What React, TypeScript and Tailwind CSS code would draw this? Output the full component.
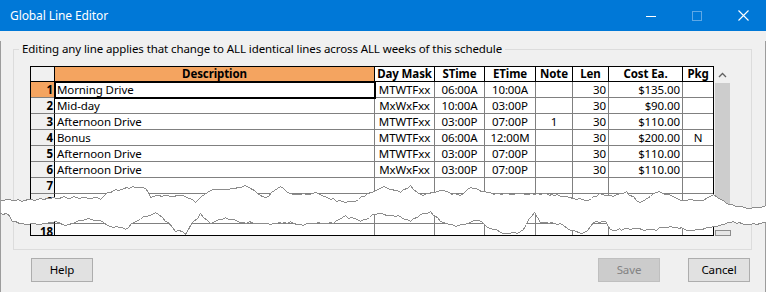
import React from "react";
import clsx from "clsx";

type Pt = [number, number];

// rough outline of the torn strip that hides rows 9..17
const upperEdge: Pt[] = [
  [0, 200], [15, 200], [40, 199], [50, 198], [70, 197], [100, 198], [107, 193], [115, 190],
  [135, 186], [145, 188], [150, 196], [170, 196], [180, 194], [195, 201], [210, 190], [225, 188],
  [247, 186], [257, 193], [265, 197], [280, 186], [290, 193], [300, 194], [315, 193], [330, 198],
  [345, 203], [355, 200], [383, 187], [400, 192], [410, 186], [420, 195], [440, 190], [460, 196],
  [470, 187], [490, 193], [510, 193], [540, 193], [560, 195], [585, 200], [599, 194], [610, 196],
  [626, 192], [639, 202], [659, 191], [680, 200], [700, 200], [713, 195], [720, 200], [735, 206],
  [750, 208], [766, 205],
];

const lowerEdge: Pt[] = [
  [0, 213], [8, 214], [12, 222], [25, 223], [40, 224], [55, 221], [65, 225], [75, 223], [85, 218],
  [100, 220], [110, 226], [125, 228], [140, 218], [155, 212], [165, 220], [175, 230], [185, 233],
  [190, 225], [200, 214], [210, 222], [225, 218], [240, 222], [260, 222], [270, 223], [290, 222],
  [300, 225], [315, 222], [330, 223], [345, 216], [360, 221], [375, 214], [395, 215], [410, 221],
  [420, 214], [430, 212], [440, 221], [455, 225], [470, 222], [478, 219], [490, 228], [506, 233],
  [520, 232], [534, 212], [540, 222], [560, 223], [570, 230], [584, 233], [593, 222], [605, 222],
  [610, 230], [630, 228], [650, 230], [670, 226], [690, 230], [713, 226], [730, 222], [750, 224],
  [766, 222],
];

const roughen = (pts: Pt[], seed: number): Pt[] => {
  let s = seed;
  const rnd = () => {
    s = (s * 9301 + 49297) % 233280;
    return s / 233280;
  };
  const out: Pt[] = [];
  for (let i = 0; i < pts.length - 1; i++) {
    const [x1, y1] = pts[i];
    const [x2, y2] = pts[i + 1];
    const steps = Math.max(1, Math.round((x2 - x1) / 3));
    for (let k = 0; k < steps; k++) {
      const x = x1 + ((x2 - x1) * k) / steps;
      const y = y1 + ((y2 - y1) * k) / steps + (rnd() - 0.5) * 2;
      out.push([Math.round(x), Math.round(y)]);
    }
  }
  out.push(pts[pts.length - 1]);
  return out;
};

const toPath = (pts: Pt[]) => pts.map(([x, y], i) => `${i ? "L" : "M"}${x + 0.5} ${y + 0.5}`).join(" ");

const Tear = () => {
  const top = roughen(upperEdge, 7);
  const bottom = roughen(lowerEdge, 31);
  const fill = toPath(top) + " " + toPath([...bottom].reverse()).replace("M", "L") + " Z";

  return (
    <svg
      className="pointer-events-none absolute inset-0 z-20"
      width={766}
      height={292}
      viewBox="0 0 766 292"
      shapeRendering="crispEdges"
    >
      <path d={fill} fill="#ffffff" />
      <path d={toPath(top)} fill="none" stroke="#8c8c8c" strokeWidth={1} />
      <path d={toPath(bottom)} fill="none" stroke="#8c8c8c" strokeWidth={1} />
    </svg>
  );
};

const TitleBar = () => (
  <div className="flex h-[31px] items-center justify-between bg-[#0078d7] text-white">
    <div className="pl-[10px] text-[12px]">Global Line Editor</div>
    <div className="flex h-full">
      <div className="flex w-[46px] items-center justify-center">
        <svg width="10" height="10" viewBox="0 0 10 10" shapeRendering="crispEdges">
          <path d="M0 5.5H10" stroke="#fff" />
        </svg>
      </div>
      <div className="flex w-[46px] items-center justify-center">
        <svg width="10" height="10" viewBox="0 0 10 10" shapeRendering="crispEdges">
          <rect x="0.5" y="0.5" width="9" height="9" fill="none" stroke="#5ea8e6" />
        </svg>
      </div>
      <div className="flex w-[46px] items-center justify-center">
        <svg width="11" height="11" viewBox="0 0 11 11">
          <path d="M0.5 0.5L10.5 10.5M10.5 0.5L0.5 10.5" stroke="#fff" strokeWidth={1.1} />
        </svg>
      </div>
    </div>
  </div>
);

const columns = [
  { title: "", w: "w-[24px]" },
  { title: "Description", w: "w-[320px]", align: "text-left pl-[2px]" },
  { title: "Day Mask", w: "w-[60px]", align: "text-center" },
  { title: "STime", w: "w-[50px]", align: "text-center" },
  { title: "ETime", w: "w-[51px]", align: "text-center" },
  { title: "Note", w: "w-[37px]", align: "text-center" },
  { title: "Len", w: "w-[36px]", align: "text-right pr-[2px]" },
  { title: "Cost Ea.", w: "w-[74px]", align: "text-right pr-[2px]" },
  { title: "Pkg", w: "w-[30px]", align: "text-center" },
];

const lines: [string, string[]][] = [
  ["1", ["Morning Drive", "MTWTFxx", "06:00A", "10:00A", "", "30", "$135.00", ""]],
  ["2", ["Mid-day", "MxWxFxx", "10:00A", "03:00P", "", "30", "$90.00", ""]],
  ["3", ["Afternoon Drive", "MTWTFxx", "03:00P", "07:00P", "1", "30", "$110.00", ""]],
  ["4", ["Bonus", "MTWTFxx", "06:00A", "12:00M", "", "30", "$200.00", "N"]],
  ["5", ["Afternoon Drive", "MTWTFxx", "03:00P", "07:00P", "", "30", "$110.00", ""]],
  ["6", ["Afternoon Drive", "MxWxFxx", "03:00P", "07:00P", "", "30", "$110.00", ""]],
  ["7", ["", "", "", "", "", "", "", ""]],
  ["8", ["", "", "", "", "", "", "", ""]],
  ["17", ["", "", "", "", "", "", "", ""]],
  ["18", ["", "", "", "", "", "", "", ""]],
];

const LineGrid = () => (
  <div className="flex">
    <div className="h-[170px] w-[684px] overflow-hidden border border-black bg-white">
      {/* header */}
      <div className="flex h-[15px] leading-[14px] font-bold">
        {columns.map((c, i) => (
          <div
            key={i}
            className={clsx(
              "shrink-0 border-b border-black text-center",
              i < columns.length - 1 && "border-r",
              c.w,
              i === 0 && "bg-[#f0f0f0]",
              i === 1 && "bg-[#f4a460]"
            )}
          >
            {c.title}
          </div>
        ))}
      </div>
      {lines.map(([num, cells]) => (
        <div key={num} className={clsx("flex leading-[15px]", num === "17" ? "h-[14px]" : "h-[16px]")}>
          <div
            className={clsx(
              "w-[24px] shrink-0 border-r border-b border-r-black border-b-[#808080] pr-[1px] text-right font-bold",
              num === "1" ? "bg-[#f4a460]" : "bg-[#f0f0f0]"
            )}
          >
            {num}
          </div>
          {cells.map((v, i) => (
            <div
              key={i}
              className={clsx(
                "shrink-0 truncate border-b border-[#808080]",
                i < cells.length - 1 && "border-r",
                columns[i + 1].w,
                columns[i + 1].align,
                num === "1" && i === 0 && "relative z-10 outline-2 outline-offset-[-1px] outline-black"
              )}
            >
              {v}
            </div>
          ))}
        </div>
      ))}
    </div>
    {/* scrollbar */}
    <div className="flex h-[170px] w-[17px] flex-col items-center">
      <div className="flex h-[17px] w-full items-center justify-center">
        <svg width="9" height="6" viewBox="0 0 9 6">
          <path d="M1 5L4.5 1.5L8 5" fill="none" stroke="#606060" strokeWidth={1.3} />
        </svg>
      </div>
      <div className="h-[133px] w-[15px] bg-[#cdcdcd]" />
      <div className="mt-auto h-[6px] w-[16px] border border-[#8c8c8c] bg-[#e6e6e6]" />
    </div>
  </div>
);

const Button = ({ label, disabled }: { label: string; disabled?: boolean }) => (
  <div
    className={clsx(
      "flex h-[24px] w-[62px] items-center justify-center border",
      disabled ? "border-[#bfbfbf] bg-[#cccccc] text-[#838383]" : "border-[#adadad] bg-[#e1e1e1] text-black"
    )}
  >
    {label}
  </div>
);

export default function App() {
  return (
    <div className="relative h-[292px] w-[766px] overflow-hidden bg-[#f0f0f0] font-['Noto_Sans',sans-serif] text-[11.5px] tracking-[-0.1px] text-black">
      <TitleBar />
      <div className="h-[261px] border-x border-b border-[#9c9c9c]">
        <fieldset className="mt-[10px] ml-[12px] w-[739px] border border-[#dcdcdc] pb-[13px]">
          <legend className="ml-[5px] px-[3px] leading-[16px]">
            Editing any line applies that change to ALL identical lines across ALL weeks of this schedule
          </legend>
          <div className="mt-[9px] ml-[16px]">
            <LineGrid />
          </div>
        </fieldset>
        <div className="mt-[8px] flex pr-[15px] pl-[30px]">
          <Button label="Help" />
          <div className="ml-auto flex gap-[28px]">
            <Button label="Save" disabled />
            <Button label="Cancel" />
          </div>
        </div>
      </div>
      <Tear />
    </div>
  );
}
